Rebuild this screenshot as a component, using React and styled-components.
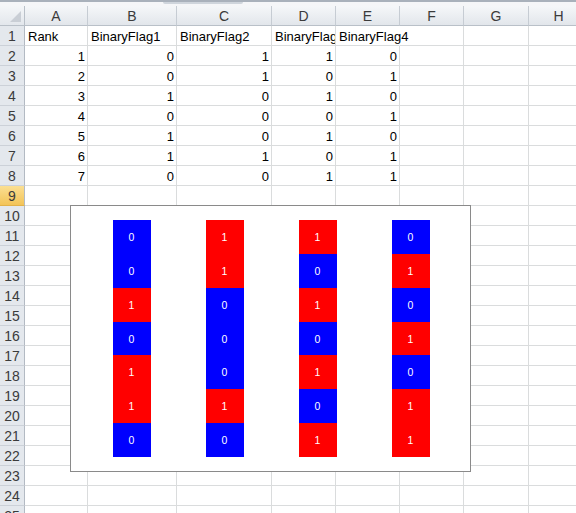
import styled, { createGlobalStyle } from 'styled-components';

const COL_WIDTHS = [63, 89, 95, 64, 64, 64, 65, 60];
const LETTERS = ['A', 'B', 'C', 'D', 'E', 'F', 'G', 'H'];
const ROW_COUNT = 25;
const ACTIVE_ROW = 9;

const table = [
  ['Rank', 'BinaryFlag1', 'BinaryFlag2', 'BinaryFlag3', 'BinaryFlag4'],
  [1, 0, 1, 1, 0],
  [2, 0, 1, 0, 1],
  [3, 1, 0, 1, 0],
  [4, 0, 0, 0, 1],
  [5, 1, 0, 1, 0],
  [6, 1, 1, 0, 1],
  [7, 0, 0, 1, 1],
];

// one bar per flag column, rows stacked top to bottom
const series = [1, 2, 3, 4].map((c) => table.slice(1).map((r) => r[c]));

const GlobalStyle = createGlobalStyle`
  html, body {
    margin: 0;
    padding: 0;
    background: #fff;
    overflow: hidden;
  }
  body {
    font-family: "Liberation Sans", Arial, sans-serif;
  }
`;

const Window = styled.div`
  position: relative;
  width: 576px;
  height: 513px;
  overflow: hidden;
  background: #fff;
`;

const TopStrip = styled.div`
  height: 6px;
  box-sizing: border-box;
  border-top: 2px solid #a9b1bb;
  background: #f5f6f8;
  display: flex;
`;

const FormulaTab = styled.div`
  margin-left: 163px;
  width: 80px;
  height: 2px;
  background: #cfd5dc;
  border-radius: 0 0 3px 3px;
`;

const Sheet = styled.div`
  display: grid;
  grid-template-columns: 25px ${COL_WIDTHS.map((w) => `${w}px`).join(' ')};
  grid-auto-rows: 20px;
`;

const Corner = styled.div`
  box-sizing: border-box;
  background: linear-gradient(#f4f6f8, #e3e7ec);
  border-right: 1px solid #b9c0c8;
  border-bottom: 1px solid #b9c0c8;
  display: flex;
  align-items: flex-end;
  justify-content: flex-end;
  padding: 0 3px 3px 0;
`;

const ColHead = styled.div`
  box-sizing: border-box;
  background: linear-gradient(#f5f7f9, #e2e6eb);
  border-right: 1px solid #c6ccd3;
  border-bottom: 1px solid #b9c0c8;
  color: #3b3b3b;
  font-size: 14px;
  display: flex;
  align-items: center;
  justify-content: center;
`;

const RowHead = styled.div`
  box-sizing: border-box;
  background: ${(p) => (p.$active ? 'linear-gradient(#fbdf92, #f3c458)' : '#e4e8ed')};
  border-right: 1px solid #b3bac3;
  border-bottom: 1px solid ${(p) => (p.$active ? '#e2b24a' : '#ccd1d8')};
  color: #3b3b3b;
  font-size: 14px;
  display: flex;
  align-items: center;
  justify-content: center;
`;

const Cell = styled.div`
  box-sizing: border-box;
  border-right: 1px solid ${(p) => (p.$spill ? 'transparent' : '#dadcdd')};
  border-bottom: 1px solid #dadcdd;
  padding: 1px 2px 0 3px;
  font-size: 13px;
  color: #000;
  white-space: nowrap;
  overflow: ${(p) => (p.$clip ? 'hidden' : 'visible')};
  display: flex;
  align-items: center;
  justify-content: ${(p) => (p.$num ? 'flex-end' : 'flex-start')};
`;

const Chart = styled.div`
  position: absolute;
  left: 70px;
  top: 205px;
  width: 401px;
  height: 267px;
  box-sizing: border-box;
  border: 1px solid #8a8a8a;
  background: #fff;
  padding: 14px 13px 14px 14px;
  display: grid;
  grid-template-columns: repeat(4, 1fr);
`;

const Category = styled.div`
  display: flex;
  justify-content: center;
`;

const Bar = styled.div`
  width: 38px;
  display: flex;
  flex-direction: column;
`;

const Segment = styled.div`
  flex: 1;
  background: ${(p) => (p.$on ? '#ff0000' : '#0000ff')};
  color: #fff;
  font-size: 10.5px;
  display: flex;
  align-items: center;
  justify-content: center;
`;

const CornerMark = () => (
  <svg width="11" height="11" viewBox="0 0 11 11">
    <polygon points="11,0 11,11 0,11" fill="#c9ced5" />
  </svg>
);

const App = () => {
  const rows = Array.from({ length: ROW_COUNT }, (_, i) => i + 1);
  return (
    <Window>
      <GlobalStyle />
      <TopStrip>
        <FormulaTab />
      </TopStrip>
      <Sheet>
        <Corner>
          <CornerMark />
        </Corner>
        {LETTERS.map((l) => (
          <ColHead key={l}>{l}</ColHead>
        ))}
        {rows.map((r) => {
          const values = table[r - 1] || [];
          return [
            <RowHead key={`h${r}`} $active={r === ACTIVE_ROW}>
              {r}
            </RowHead>,
            ...LETTERS.map((l, c) => {
              const v = values[c];
              const has = v !== undefined;
              const nextHas = values[c + 1] !== undefined;
              const isText = typeof v === 'string';
              return (
                <Cell
                  key={`${l}${r}`}
                  $num={typeof v === 'number'}
                  $clip={nextHas}
                  $spill={has && isText && !nextHas}
                >
                  {has ? v : ''}
                </Cell>
              );
            }),
          ];
        })}
      </Sheet>
      <Chart>
        {series.map((s, i) => (
          <Category key={i}>
            <Bar>
              {s.map((v, j) => (
                <Segment key={j} $on={v === 1}>
                  {v}
                </Segment>
              ))}
            </Bar>
          </Category>
        ))}
      </Chart>
    </Window>
  );
};

export default App;
